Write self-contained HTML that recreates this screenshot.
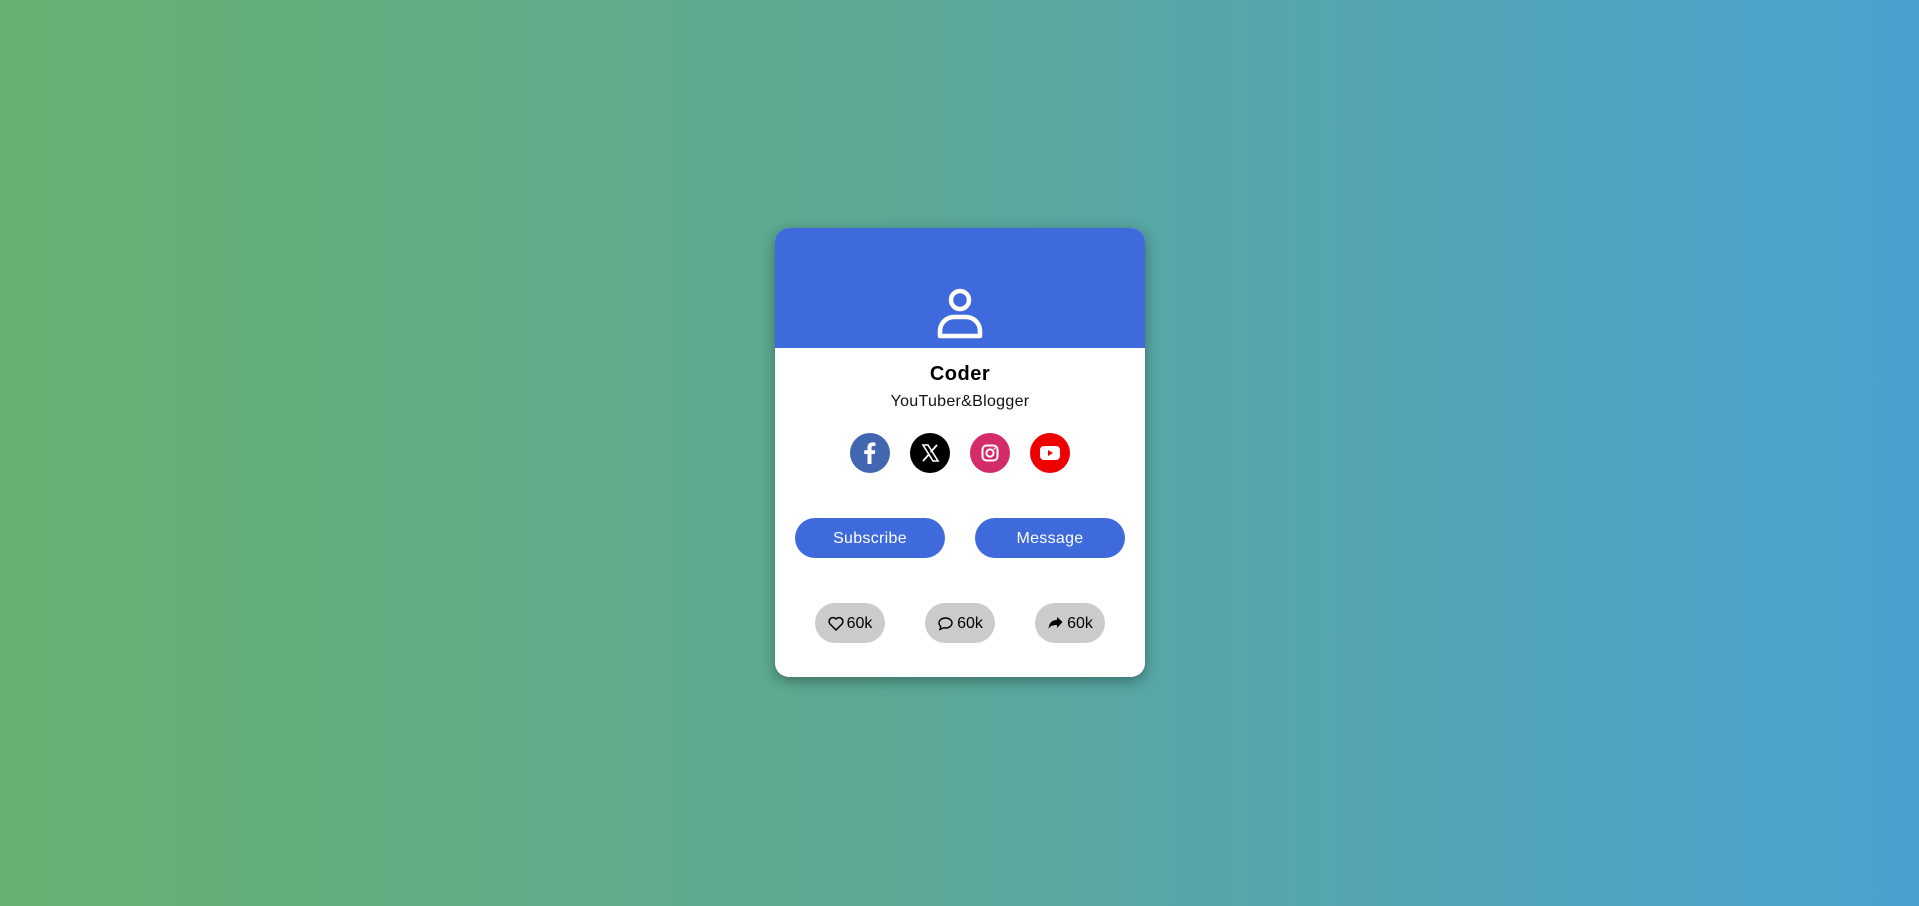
<!DOCTYPE html>
<html><head><style>
*{margin:0;padding:0;box-sizing:border-box}
body{width:1919px;height:906px;background:linear-gradient(90deg,#68b071,#5ca995 45%,#4aa1d0);font-family:"Liberation Sans",sans-serif;position:relative;overflow:hidden}
.card{position:absolute;left:775px;top:228px;width:370px;height:449px;background:#fff;border-radius:14px;box-shadow:0 4px 14px rgba(0,0,0,.35);overflow:hidden}
.hd{height:120px;background:#3e6adb;position:relative}
.abs{position:absolute}
.name{top:135px;width:100%;text-align:center;font-size:20px;font-weight:bold;color:#000;letter-spacing:.5px}
.sub{top:165px;width:100%;text-align:center;font-size:16px;color:#111;letter-spacing:.3px}
.c{position:absolute;top:205px;width:40px;height:40px;border-radius:50%}
.btn{position:absolute;top:290px;width:150px;height:40px;border-radius:20px;background:#3e6adb;color:#fff;font-size:16px;text-align:center;line-height:42px;letter-spacing:.3px}
.p{position:absolute;top:375px;width:70px;height:40px;border-radius:20px;background:#cbcbcb;font-size:16px;line-height:40px;text-align:center;color:#000;display:flex;align-items:center;justify-content:center;gap:3px;padding-top:1px}
</style></head><body>
<div class="card">
<div class="hd">
<svg class="abs" style="left:161px;top:59px" width="48" height="54" viewBox="0 0 48 54"><circle cx="24" cy="13" r="9" fill="none" stroke="#fff" stroke-width="4.5"/><path d="M4 49 V44 A14 14 0 0 1 18 30 H30 A14 14 0 0 1 44 44 V49 Z" fill="none" stroke="#fff" stroke-width="4.5" stroke-linejoin="round"/></svg>
</div>
<div class="abs name">Coder</div>
<div class="abs sub">YouTuber&amp;Blogger</div>
<div class="c" style="left:75px;background:#4267b0"><svg width="40" height="40" viewBox="0 0 40 40"><path d="M21.5 31V21h3.3l.5-3.8h-3.8v-2.4c0-1.1.3-1.8 1.9-1.8h2V9.6c-.4 0-1.6-.2-3-.2-2.9 0-4.9 1.8-4.9 5v2.8h-3.3V21h3.3v10z" fill="#fff"/></svg></div>
<div class="c" style="left:135px;background:#000"><svg width="40" height="40" viewBox="0 0 40 40"><path d="M13 12h5l10 16h-5z" fill="none" stroke="#fff" stroke-width="1.6"/><path d="M27 12l-6.3 7M13 28l6.3-7" stroke="#fff" stroke-width="1.8"/></svg></div>
<div class="c" style="left:195px;background:#d42b69"><svg width="40" height="40" viewBox="0 0 40 40"><rect x="12.5" y="12.5" width="15" height="15" rx="4" fill="none" stroke="#fff" stroke-width="2"/><circle cx="20" cy="20" r="3.6" fill="none" stroke="#fff" stroke-width="2"/><circle cx="24.5" cy="15.5" r="1" fill="#fff"/></svg></div>
<div class="c" style="left:255px;background:#ee0000"><svg width="40" height="40" viewBox="0 0 40 40"><rect x="10" y="13" width="20" height="14" rx="4" fill="#fff"/><path d="M18 17l5 3-5 3z" fill="#e00"/></svg></div>
<div class="btn" style="left:20px">Subscribe</div>
<div class="btn" style="left:200px">Message</div>
<div class="p" style="left:40px"><svg width="16" height="15" viewBox="0 0 16 15"><path d="M8 14L2 8A3.6 3.6 0 0 1 8 3a3.6 3.6 0 0 1 6 5z" fill="none" stroke="#000" stroke-width="1.5"/></svg>60k</div>
<div class="p" style="left:150px"><svg width="17" height="15" viewBox="0 0 16 15"><path d="M8 2C4.3 2 1.5 4.3 1.5 7c0 1.4.7 2.6 1.8 3.5L2.5 13.5 6 11.8c.6.1 1.3.2 2 .2 3.7 0 6.5-2.3 6.5-5S11.7 2 8 2z" fill="none" stroke="#000" stroke-width="1.4"/></svg>60k</div>
<div class="p" style="left:260px"><svg width="17" height="15" viewBox="0 0 16 15"><path d="M15 6L9.5 1v3C4 4 1.5 7.5 1 13c1.5-3 4-4 8.5-4v3z" fill="#000"/></svg>60k</div>
</div>
</body></html>
